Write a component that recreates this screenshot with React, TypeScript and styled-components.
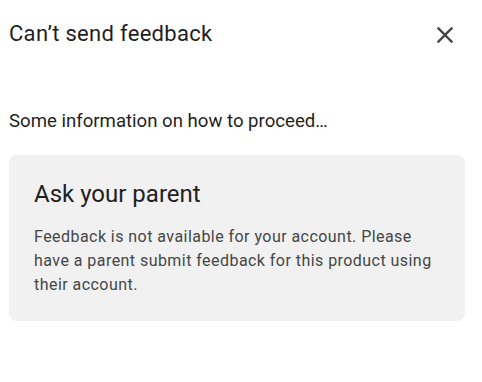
import React from "react";
import styled, { createGlobalStyle } from "styled-components";

const Global = createGlobalStyle`
  html, body { margin: 0; padding: 0; background: #ffffff; }
  body { font-family: Roboto, "Noto Sans", Arial, sans-serif; -webkit-font-smoothing: antialiased; }
`;

const Dialog = styled.div`
  width: 482px;
  height: 382px;
  box-sizing: border-box;
  padding: 20px 17px 0 9px;
  display: flex;
  flex-direction: column;
`;

const Header = styled.div`
  display: flex;
  align-items: flex-start;
  justify-content: space-between;
`;

const Title = styled.h2`
  margin: 0;
  font-size: 22px;
  font-weight: 400;
  letter-spacing: 0.3px;
  color: #1f1f1f;
  line-height: 28px;
`;

const CloseButton = styled.button`
  border: none;
  background: transparent;
  padding: 0;
  margin: 1px 6px 0 0;
  width: 28px;
  height: 28px;
  display: flex;
  align-items: center;
  justify-content: center;
  cursor: pointer;
  color: #444746;
`;

const Lead = styled.p`
  margin: 60px 0 0 0;
  font-size: 18.6px;
  line-height: 24px;
  color: #1f1f1f;
`;

const Card = styled.div`
  margin-top: 22px;
  background: #f1f1f1;
  border-radius: 8px;
  padding: 23px 25px 24px 25px;
`;

const CardTitle = styled.h3`
  margin: 0;
  font-size: 24px;
  font-weight: 400;
  line-height: 32px;
  color: #1f1f1f;
`;

const CardBody = styled.p`
  margin: 15px 0 0 0;
  font-size: 16px;
  line-height: 24px;
  letter-spacing: 0.45px;
  color: #444746;
`;

export default function App() {
  return (
    <>
      <Global />
      <Dialog>
        <Header>
          <Title>Can’t send feedback</Title>
          <CloseButton aria-label="Close">
            <svg width="28" height="28" viewBox="0 0 24 24" fill="currentColor">
              <path d="M19 6.41 17.59 5 12 10.59 6.41 5 5 6.41 10.59 12 5 17.59 6.41 19 12 13.41 17.59 19 19 17.59 13.41 12z" />
            </svg>
          </CloseButton>
        </Header>
        <Lead>Some information on how to proceed…</Lead>
        <Card>
          <CardTitle>Ask your parent</CardTitle>
          <CardBody>
            Feedback is not available for your account. Please have a parent submit feedback for this product using their account.
          </CardBody>
        </Card>
      </Dialog>
    </>
  );
}
